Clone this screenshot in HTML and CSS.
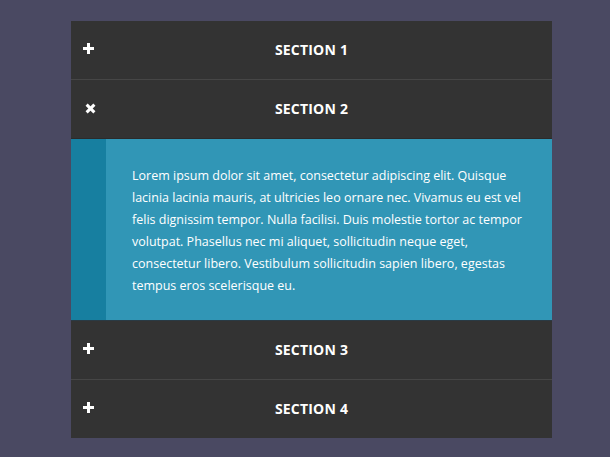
FILE: index.html
```html
<!DOCTYPE html>
<html>
<head>
<meta charset="utf-8">
<link rel="stylesheet" href="styles.css">
</head>
<body>
<div class="accordion">
  <div class="item">
    <div class="head"><span class="icon plus"></span><span class="title">SECTION 1</span></div>
  </div>
  <div class="item open">
    <div class="head"><span class="icon close"></span><span class="title">SECTION 2</span></div>
    <div class="body">
      <div class="stripe"></div>
      <p class="text">Lorem ipsum dolor sit amet, consectetur adipiscing elit. Quisque lacinia lacinia mauris, at ultricies leo ornare nec. Vivamus eu est vel felis dignissim tempor. Nulla facilisi. Duis molestie tortor ac tempor volutpat. Phasellus nec mi aliquet, sollicitudin neque eget, consectetur libero. Vestibulum sollicitudin sapien libero, egestas tempus eros scelerisque eu.</p>
    </div>
  </div>
  <div class="item">
    <div class="head"><span class="icon plus"></span><span class="title">SECTION 3</span></div>
  </div>
  <div class="item last">
    <div class="head"><span class="icon plus"></span><span class="title">SECTION 4</span></div>
  </div>
</div>
</body>
</html>
```
FILE: styles.css
```css
html, body {
  margin: 0;
  padding: 0;
  background: #4a4962;
}
body {
  padding: 21px 0 0 71px;
  font-family: "Open Sans", "Noto Sans", sans-serif;
}
.accordion {
  width: 481px;
  background: #333333;
}
.head {
  position: relative;
  height: 58px;
  display: flex;
  align-items: center;
  justify-content: center;
  border-bottom: 1px solid #464646;
  color: #ffffff;
}
.item.last .head {
  border-bottom: none;
}
.item.open .head {
  border-bottom-color: #2b2b2b;
}
.title {
  font-weight: 700;
  font-size: 14px;
  letter-spacing: 0.2px;
  margin-top: -1px;
}
.icon {
  position: absolute;
  width: 11px;
  height: 11px;
}
.icon::before, .icon::after {
  content: "";
  position: absolute;
  background: #ffffff;
}
.plus {
  left: 12px;
  top: 22px;
}
.plus::before {
  left: 0; top: 4px; width: 11px; height: 3px;
}
.plus::after {
  left: 4px; top: 0; width: 3px; height: 11px;
}
.close {
  left: 14px;
  top: 23px;
  transform: rotate(45deg);
}
.close::before {
  left: 0; top: 4px; width: 11px; height: 3px;
}
.close::after {
  left: 4px; top: 0; width: 3px; height: 11px;
}
.body {
  display: flex;
  background: #3196b6;
  border-bottom: 1px solid #2a3a44;
}
.stripe {
  width: 35px;
  flex: none;
  background: #177fa0;
}
.text {
  margin: 0;
  padding: 26px 24px 23px 26px;
  color: #ffffff;
  font-size: 12.5px;
  line-height: 22px;
}
```
